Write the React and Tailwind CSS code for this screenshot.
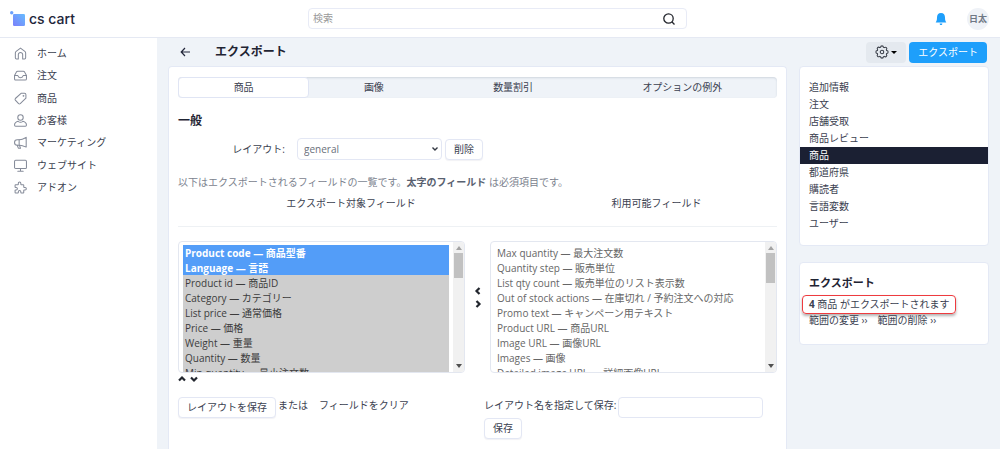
import { useState } from "react";

const navItems = [
  { label: "ホーム", icon: "home" },
  { label: "注文", icon: "inbox" },
  { label: "商品", icon: "tag" },
  { label: "お客様", icon: "user" },
  { label: "マーケティング", icon: "megaphone" },
  { label: "ウェブサイト", icon: "monitor" },
  { label: "アドオン", icon: "puzzle" },
];

const tabs = ["商品", "画像", "数量割引", "オプションの例外"];

const sections = [
  "追加情報",
  "注文",
  "店舗受取",
  "商品レビュー",
  "商品",
  "都道府県",
  "購読者",
  "言語変数",
  "ユーザー",
];

const exportedFields = [
  { label: "Product code — 商品型番", required: true },
  { label: "Language — 言語", required: true },
  { label: "Product id — 商品ID" },
  { label: "Category — カテゴリー" },
  { label: "List price — 通常価格" },
  { label: "Price — 価格" },
  { label: "Weight — 重量" },
  { label: "Quantity — 数量" },
  { label: "Min quantity — 最小注文数" },
];

const availableFields = [
  "Max quantity — 最大注文数",
  "Quantity step — 販売単位",
  "List qty count — 販売単位のリスト表示数",
  "Out of stock actions — 在庫切れ / 予約注文への対応",
  "Promo text — キャンペーン用テキスト",
  "Product URL — 商品URL",
  "Image URL — 画像URL",
  "Images — 画像",
  "Detailed image URL — 詳細画像URL",
];

const iconPaths = {
  home: (
    <>
      <path d="M2.5 11q0-2 1.500-3L12 2l8 6q1.500 1 1.500 3v9q0 2-2 2H16v-8a4 4 0 0 0-8 0v8H4.500q-2 0-2-2z" />
    </>
  ),
  inbox: (
    <>
      <path d="M7 4h10q2 0 2.800 2L23 12v6q0 2.500-2.500 2.500h-17Q1 20.500 1 18v-6l3.200-6Q5 4 7 4z" />
      <path d="M1 12h6c.5 2.500 2 4 5 4s4.500-1.500 5-4h6" />
    </>
  ),
  tag: (
    <>
      <path d="M13 2.500h6.500q2.500 0 2.500 2.500v6.500L11.500 21.500q-1.500 1.200-3 0L2.500 15q-1.200-1.500 0-3z" />
      <circle cx="17.500" cy="7" r="0.700" />
    </>
  ),
  user: (
    <>
      <circle cx="12" cy="6.500" r="5" />
      <path d="M7.500 13.500C4 14.500 1 17 1 20.500q0 2 2 2h18q2 0 2-2c0-3.500-3-6-6.500-7-2.500 2-6.500 2-9 0z" />
    </>
  ),
  megaphone: (
    <>
      <path d="M22.500 2.500v18c-4.500-2-8-3.500-12-3.500H6A4.500 4.500 0 0 1 6 7h4.500c4 0 7.500-2 12-4.500z" />
      <path d="M9.500 7v10M6 17l2 5.500h4L10 17" />
    </>
  ),
  monitor: (
    <>
      <rect x="1" y="2.500" width="22" height="15" rx="2" />
      <path d="M12 17.500V22M7 22.500h10" />
    </>
  ),
  puzzle: (
    <path d="M3 7h4a1 1 0 0 0 1-1V4a2.300 2.300 0 0 1 4.600 0v2a1 1 0 0 0 1 1h3.400a1 1 0 0 1 1 1v3a1 1 0 0 0 1 1h1.500a2.300 2.300 0 0 1 0 4.600H19a1 1 0 0 0-1 1v3.400a1 1 0 0 1-1 1h-3.400a1 1 0 0 1-1-1v-1a2.300 2.300 0 0 0-4.600 0v1a1 1 0 0 1-1 1H3a1 1 0 0 1-1-1v-3.400a1 1 0 0 1 1-1h1a2.300 2.300 0 0 0 0-4.600H3a1 1 0 0 1-1-1V8a1 1 0 0 1 1-1z" />
  ),
};

function NavIcon({ name }) {
  return (
    <svg viewBox="0 0 24 24" className="size-[13px] shrink-0 text-[#858b99]" fill="none" stroke="currentColor" strokeWidth="1.9" strokeLinejoin="round" strokeLinecap="round" aria-hidden="true">
      {iconPaths[name]}
    </svg>
  );
}

function Chevron({ d }) {
  return (
    <svg viewBox="0 0 8 8" className="size-2" fill="none" stroke="#22262e" strokeWidth="2.2" aria-hidden="true">
      <path d={d} />
    </svg>
  );
}

function ScrollTrack({ long }) {
  return (
    <div className="flex w-[11px] shrink-0 flex-col items-center bg-[#f1f1f1] py-1" aria-hidden="true">
      <svg viewBox="0 0 6 4" className="h-1 w-[6px] fill-[#a3a3a3]"><path d="M0 4 3 0l3 4z" /></svg>
      <div className={long ? "mt-[3px] h-[30px] w-[9px] bg-[#c1c1c1]" : "mt-[3px] h-[25px] w-[9px] bg-[#c1c1c1]"} />
      <svg viewBox="0 0 6 4" className="mt-auto h-1 w-[6px] fill-[#505050]"><path d="M0 0h6L3 4z" /></svg>
    </div>
  );
}

const buttonClass = "h-[21px] rounded border border-[#e3e7f4] bg-white px-2 shadow-[0_1px_1px_rgba(30,40,90,0.06)]";

export default function App() {
  const [activeTab, setActiveTab] = useState("商品");
  const [layoutName, setLayoutName] = useState("");

  return (
    <div className="flex min-h-screen flex-col bg-[#eff3f8] font-['Open_Sans','Noto_Sans_CJK_JP',sans-serif] text-[10px] leading-[17px] text-[#3b4150]">
      {/* Top bar */}
      <header className="flex h-[38px] shrink-0 items-center border-b border-[#e5e9f3] bg-white">
        <a href="#" className="flex w-[157px] shrink-0 items-center gap-1 pl-[10px] font-[Inter,sans-serif] text-sm font-medium text-[#22263a]">
          <svg viewBox="0 0 15 15" className="size-[15px]" aria-hidden="true">
            <defs>
              <linearGradient id="logo" x1="0" y1="1" x2="1" y2="0">
                <stop offset="0" stopColor="#7b7ffa" />
                <stop offset="1" stopColor="#66bcff" />
              </linearGradient>
            </defs>
            <rect x="3" y="3" width="12" height="12" rx="1.2" fill="url(#logo)" />
            <circle cx="1.7" cy="1.7" r="1.7" fill="#6ba0fc" />
          </svg>
          cs cart
        </a>
        <form className="flex flex-1 justify-center" onSubmit={(e) => e.preventDefault()}>
          <div className="flex h-[21px] w-full max-w-[379px] items-center rounded border border-[#e8ebf6] pr-[11px]">
            <input type="search" aria-label="検索" placeholder="検索" className="min-w-0 flex-1 px-1 outline-none placeholder:text-[#9a9a9a]" />
            <button type="submit" aria-label="検索する">
              <svg viewBox="0 0 12 12" className="size-3" fill="none" stroke="#22252c" strokeWidth="1.3" aria-hidden="true">
                <circle cx="5.5" cy="5.5" r="4.7" />
                <path d="m8.800 8.800 2.700 2.700" />
              </svg>
            </button>
          </div>
        </form>
        <div className="flex w-[162px] shrink-0 items-center justify-end gap-5 pr-[11px]">
          <button type="button" aria-label="通知">
            <svg viewBox="0 0 12 14" className="h-[14px] w-3 fill-[#1e9ffb]" aria-hidden="true">
              <path d="M6 1C3.200 1 2 3 2 5.500 2 8 1.500 9 .7 10.500h10.600C10.500 9 10 8 10 5.500 10 3 8.800 1 6 1zM4.700 11.500h2.600c0 1-.5 1.500-1.300 1.500s-1.300-.5-1.300-1.500z" />
            </svg>
          </button>
          <button type="button" className="size-[22px] rounded-full bg-[#eff2f7] text-[9px] font-bold text-[#6f7885]">日太</button>
        </div>
      </header>

      <div className="flex flex-1">
        {/* Sidebar */}
        <nav className="w-[157px] shrink-0 bg-white pt-1">
          <ul className="grid h-[157px] grid-rows-7">
            {navItems.map((item) => (
              <li key={item.label} className="flex items-center">
                <a href="#" className="flex items-center gap-[10px] pl-[14px]">
                  <NavIcon name={item.icon} />
                  {item.label}
                </a>
              </li>
            ))}
          </ul>
        </nav>

        <main className="flex min-w-0 flex-1 flex-col pr-[11px] pl-[11px]">
          {/* Page title and actions */}
          <div className="flex h-7 shrink-0 items-center pr-[2px] pl-3">
            <a href="#" aria-label="戻る" className="mr-6">
              <svg viewBox="0 0 11 10" className="h-[10px] w-[11px]" fill="none" stroke="#22263a" strokeWidth="1.2" aria-hidden="true">
                <path d="M10 5H1.500M5 1 1.200 5 5 9" />
              </svg>
            </a>
            <h1 className="text-xs font-bold text-[#1f2433]">エクスポート</h1>
            <div className="ml-auto flex gap-[3px]">
              <button type="button" aria-label="設定" className="flex h-[21px] w-10 items-center justify-center gap-[2px] rounded bg-[#e4e9ef]">
                <svg viewBox="0 0 16 16" className="size-[14px]" fill="none" stroke="#383d47" strokeWidth="1.2" strokeLinejoin="round" aria-hidden="true">
                  <path d="M6.300 2.700Q6.500 1 8 1t1.700 1.700l.8.300q1.400-1 2.500 0t0 2.500l.3.800Q15 6.500 15 8t-1.700 1.700l-.3.800q1 1.400 0 2.500t-2.500 0l-.8.300Q9.500 15 8 15t-1.700-1.700l-.8-.3q-1.400 1-2.500 0t0-2.500l-.3-.8Q1 9.500 1 8t1.700-1.700l.3-.8Q2 4.100 3 3t2.500 0z" />
                  <circle cx="8" cy="8" r="2" />
                </svg>
                <svg viewBox="0 0 6 3" className="h-[3px] w-[6px] fill-black" aria-hidden="true"><path d="M0 0h6L3 3z" /></svg>
              </button>
              <button type="button" className="h-[21px] rounded bg-[#1e9ffb] px-[9px] text-white">エクスポート</button>
            </div>
          </div>

          <div className="flex flex-1 gap-3">
            <section className="min-w-0 flex-1 rounded-t border border-b-0 border-[#e4e9f5] bg-white px-[9px] pt-[10px] pb-1">
              <div role="tablist" className="flex h-[21px] rounded bg-[#eff3f8] shadow-[inset_0_1px_2px_rgba(40,60,90,0.15)]">
                {tabs.map((tab) => (
                  <button
                    key={tab}
                    type="button"
                    role="tab"
                    aria-selected={activeTab === tab}
                    onClick={() => setActiveTab(tab)}
                    className={activeTab === tab ? "flex-auto rounded border border-[#e0e5f4] bg-white" : "flex-auto"}
                  >
                    {tab}
                  </button>
                ))}
              </div>

              <h2 className="mt-[14px] text-xs leading-[17px] font-bold text-[#1f2433]">一般</h2>

              <div className="mt-[9px] flex items-center">
                <label htmlFor="layout" className="w-[107px] text-right">レイアウト:</label>
                <div className="relative ml-3">
                  <select id="layout" className="h-[22px] w-[145px] appearance-none rounded border border-[#e3e7f4] bg-white px-[6px] text-[#6a6f7a]">
                    <option>general</option>
                  </select>
                  <svg viewBox="0 0 6 4" className="pointer-events-none absolute top-[9px] right-1 h-1 w-[6px]" fill="none" stroke="#333842" strokeWidth="1.4" aria-hidden="true">
                    <path d="m.5.5 2.500 2.500L5.500.5" />
                  </svg>
                </div>
                <button type="button" className={`${buttonClass} ml-[3px]`}>削除</button>
              </div>

              <p className="mt-[14px] text-[#7b828e]">
                以下はエクスポートされるフィールドの一覧です。<strong className="text-[#596170]">太字のフィールド</strong> は必須項目です。
              </p>

              <div className="mt-1 flex border-b border-[#eef1f4] pb-[14px]">
                <label htmlFor="exported" className="w-[346px] shrink-0 text-center">エクスポート対象フィールド</label>
                <label htmlFor="available" className="flex-1 pl-3 text-center">利用可能フィールド</label>
              </div>

              {/* Field pickers */}
              <div className="mt-[14px] flex">
                <div className="flex h-[132px] min-w-0 flex-1 overflow-hidden rounded border border-[#e3e7f0]">
                  <select
                    id="exported"
                    multiple
                    defaultValue={exportedFields.map((field) => field.label)}
                    className="h-full min-w-0 flex-1 overflow-y-auto pt-[3px] pr-1 pl-1 [scrollbar-width:none]"
                  >
                    {exportedFields.map((field) => (
                      <option
                        key={field.label}
                        value={field.label}
                        className={field.required ? "bg-[linear-gradient(#539df8,#539df8)] px-[2px] font-bold text-white!" : "px-[2px] text-[#3c3c3c]!"}
                      >
                        {field.label}
                      </option>
                    ))}
                  </select>
                  <ScrollTrack />
                </div>
                <div className="flex w-[25px] shrink-0 flex-col items-center justify-center gap-[5px] pb-5">
                  <button type="button" aria-label="追加"><Chevron d="M5.500 1 2.500 4l3 3" /></button>
                  <button type="button" aria-label="除外"><Chevron d="m2.500 1 3 3-3 3" /></button>
                </div>
                <div className="flex h-[132px] min-w-0 flex-1 overflow-hidden rounded border border-[#e3e7f0]">
                  <select id="available" multiple className="h-full min-w-0 flex-1 overflow-y-auto pt-[3px] pr-1 pl-1 text-[#666] [scrollbar-width:none]">
                    {availableFields.map((label) => (
                      <option key={label} className="px-[2px]">{label}</option>
                    ))}
                  </select>
                  <ScrollTrack long />
                </div>
              </div>
              <div className="mt-[2px] flex gap-1">
                <button type="button" aria-label="上へ"><Chevron d="m1 5.500 3-3 3 3" /></button>
                <button type="button" aria-label="下へ"><Chevron d="m1 2.500 3 3 3-3" /></button>
              </div>

              {/* Save layout */}
              <div className="mt-[14px] flex items-start">
                <div className="flex w-[306px] shrink-0 items-start">
                  <button type="button" className={buttonClass}>レイアウトを保存</button>
                  <span className="ml-[2px]">または</span>
                  <a href="#" className="ml-[11px]">フィールドをクリア</a>
                </div>
                <form onSubmit={(e) => e.preventDefault()}>
                  <div className="flex items-start">
                    <label htmlFor="layout-name" className="mr-[2px]">レイアウト名を指定して保存:</label>
                    <input
                      id="layout-name"
                      type="text"
                      value={layoutName}
                      onChange={(e) => setLayoutName(e.target.value)}
                      className="h-[21px] w-[145px] rounded border border-[#e3e7f4] px-[6px]"
                    />
                  </div>
                  <button type="submit" className={buttonClass}>保存</button>
                </form>
              </div>
            </section>

            <aside className="flex w-[190px] shrink-0 flex-col gap-4">
              <ul className="rounded border border-[#e4e9f5] bg-white pt-3 pb-[13px]">
                {sections.map((section) => (
                  <li key={section}>
                    <a href="#" className={section === "商品" ? "block bg-[#1b2033] px-[9px] text-white" : "block px-[9px]"}>
                      {section}
                    </a>
                  </li>
                ))}
              </ul>
              <div className="rounded border border-[#e4e9f5] bg-white px-[9px] pt-[11px] pb-[17px]">
                <h2 className="text-[11px] font-bold text-[#1f2433]">エクスポート</h2>
                <div className="mt-1 -ml-[7px] w-[154px] rounded border border-[#ee3b3f] pl-[6px] leading-[17px] shadow-[0_2px_3px_rgba(0,0,0,0.3)]">
                  <strong>4</strong> 商品 がエクスポートされます
                </div>
                <div className="flex gap-[10px] leading-[13px]">
                  <a href="#">範囲の変更 ››</a>
                  <a href="#">範囲の削除 ››</a>
                </div>
              </div>
            </aside>
          </div>
        </main>
      </div>
    </div>
  );
}
